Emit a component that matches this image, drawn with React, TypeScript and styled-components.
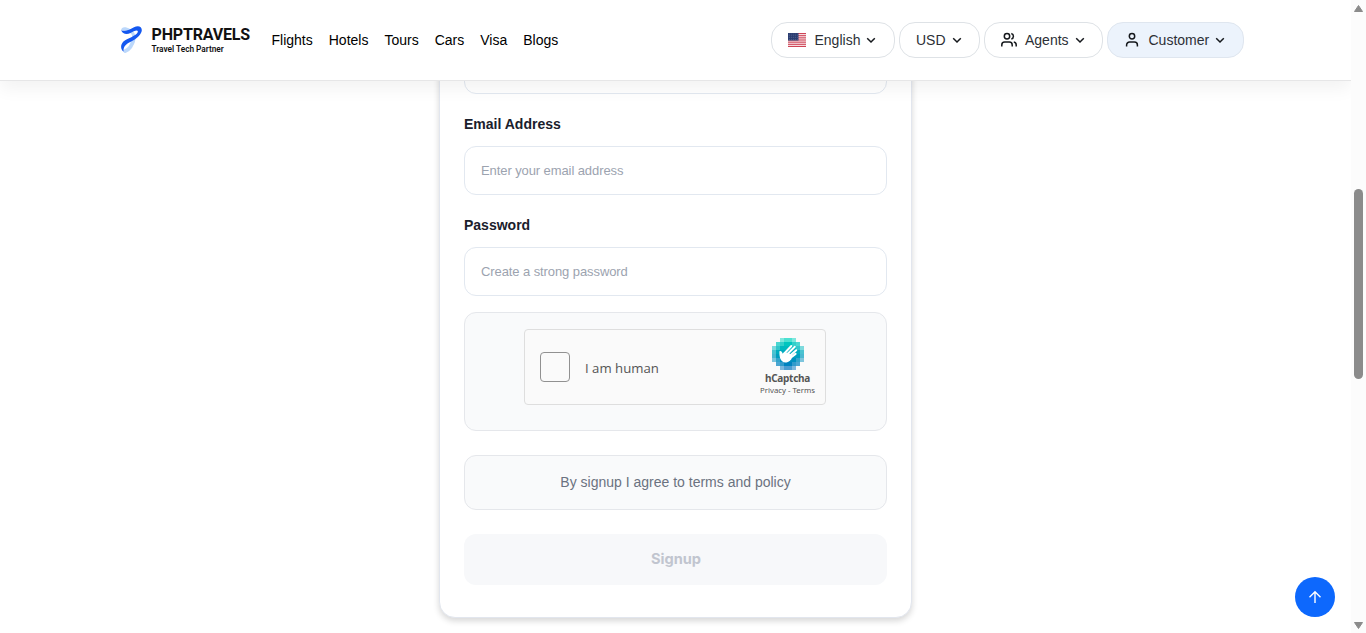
import React from "react";
import styled, { createGlobalStyle } from "styled-components";

const GlobalStyle = createGlobalStyle`
  *, *::before, *::after { box-sizing: border-box; }
  html, body { margin: 0; height: 100%; overflow: hidden; background: #fff; }
  body { font-family: "Liberation Sans", Arial, sans-serif; font-size: 14px; color: #000; }
  button, input { font-family: inherit; margin: 0; }
`;

const Window = styled.div`
  display: grid;
  grid-template-columns: 1fr 15px;
  height: 633px;
  overflow: hidden;
`;

const Page = styled.div`
  position: relative;
  display: flex;
  flex-direction: column;
  min-width: 0;
  height: 633px;
  overflow: hidden;
`;

const Header = styled.header`
  position: relative;
  z-index: 2;
  flex: none;
  display: flex;
  align-items: center;
  justify-content: space-between;
  height: 81px;
  padding: 0 107px 0 120px;
  background: #fff;
  border-bottom: 1px solid #e6e6e7;
  box-shadow: 0 8px 16px rgba(0, 0, 0, 0.05);
`;

const HeaderSide = styled.div<{ $gap: number }>`
  display: flex;
  align-items: center;
  gap: ${(p) => p.$gap}px;
`;

const Brand = styled.a`
  display: flex;
  align-items: flex-start;
  width: 135.5px;
  height: 30px;
  gap: 7.5px;
  color: #111;
`;

const BrandText = styled.div`
  font-family: Roboto, sans-serif;
  white-space: nowrap;
`;

const BrandName = styled.div`
  font-size: 16px;
  line-height: 19px;
  font-weight: 700;
  letter-spacing: -0.17px;
`;

const BrandTag = styled.div`
  margin-top: 1px;
  font-size: 8.3px;
  line-height: 9px;
  font-weight: 600;
  letter-spacing: -0.02px;
`;

const NavLink = styled.a`
  line-height: 20px;
`;

const PillButton = styled.button<{ $width: number; $tinted?: boolean; $gap?: number }>`
  display: flex;
  align-items: center;
  width: ${(p) => p.$width}px;
  height: 36px;
  padding: 0 0 0 16px;
  border: 1px solid ${(p) => (p.$tinted ? "#dfe6ef" : "#dee2e6")};
  border-radius: 16px;
  background: ${(p) => (p.$tinted ? "#ecf3fc" : "#fff")};
  color: #2c3036;
  font-size: 14px;
  gap: ${(p) => p.$gap ?? 8}px;
`;

const PillLabel = styled.span`
  display: flex;
  align-items: center;
  gap: 5px;
  line-height: 20px;
`;

const Main = styled.main`
  flex: 1;
  min-height: 0;
  display: flex;
  justify-content: center;
  align-items: flex-start;
`;

const Card = styled.form`
  width: 473px;
  height: 574px;
  margin-top: -37px;
  padding: 0 24px;
  background: #fff;
  border: 1px solid #e2e6ee;
  border-radius: 16px;
  box-shadow: 0 3px 6px rgba(0, 0, 0, 0.16);
`;

const Field = styled.label`
  display: flex;
  flex-direction: column;
  margin-bottom: 16px;
`;

const FieldLabel = styled.span`
  height: 36px;
  padding-top: 4px;
  line-height: 20px;
  font-weight: 700;
  color: #1a202c;
`;

const Input = styled.input`
  width: 100%;
  height: 49px;
  padding: 0 16px;
  border: 1px solid #e2e8f0;
  border-radius: 12px;
  background: #fff;
  font-size: 13px;
  letter-spacing: -0.09px;
  outline: none;
  &::placeholder { color: #9ca3af; opacity: 1; }
`;

const Panel = styled.div<{ $height: number }>`
  display: flex;
  justify-content: center;
  align-items: flex-start;
  height: ${(p) => p.$height}px;
  padding-top: 16px;
  margin-bottom: 24px;
  border: 1px solid #e5e7eb;
  border-radius: 12px;
  background: #f9fafb;
  color: #6b7280;
  line-height: 20px;
`;

const Captcha = styled.div`
  display: flex;
  align-items: center;
  width: 302px;
  height: 76px;
  padding-left: 15px;
  margin-right: 1px;
  border: 1px solid #dedede;
  border-radius: 4px;
  background: #fafafa;
  color: #555;
  font-family: "Noto Sans", "Open Sans", sans-serif;
`;

const CheckBox = styled.div`
  width: 30px;
  height: 30px;
  border: 1px solid #919191;
  border-radius: 4px;
  background: #fafafa;
`;

const CaptchaText = styled.span`
  flex: 1;
  margin: 2px 0 0 15px;
  font-family: "Open Sans", "Noto Sans", sans-serif;
  font-size: 13.2px;
`;

const CaptchaBrand = styled.div`
  display: flex;
  flex-direction: column;
  align-items: center;
  width: 75px;
  height: 59px;
`;

const CaptchaName = styled.span`
  margin-top: 2px;
  font-size: 10px;
  line-height: 13px;
  font-weight: 700;
  letter-spacing: -0.25px;
`;

const CaptchaLinks = styled.span`
  margin-top: -1px;
  font-size: 7.8px;
  line-height: 12px;
  white-space: nowrap;
`;

const Submit = styled.button`
  width: 100%;
  height: 51px;
  padding: 0 0 2px 1px;
  border: 0;
  border-radius: 12px;
  background: #f7f8fa;
  color: #c1c5cf;
  font-family: Inter, sans-serif;
  font-size: 14.6px;
  font-weight: 700;
`;

const ScrollTop = styled.button`
  position: absolute;
  right: 16px;
  bottom: 16px;
  display: flex;
  align-items: center;
  justify-content: center;
  width: 40px;
  height: 40px;
  padding: 0;
  border: 0;
  border-radius: 50%;
  background: #0d68fd;
`;

const Scrollbar = styled.div`
  display: flex;
  flex-direction: column;
  align-items: center;
  background: #fcfcfc;
  height: 633px;
`;

const ScrollTrack = styled.div`
  flex: 1;
  padding-top: 173px;
`;

const ScrollThumb = styled.div`
  width: 9px;
  height: 190px;
  border-radius: 5px;
  background: #8b8b8b;
`;

const Chevron = () => (
  <svg width="12" height="12" viewBox="0 0 12 12" fill="none">
    <path d="M2.200 4.200 6 8l3.800-3.800" stroke="#15181c" strokeWidth="1.500" />
  </svg>
);

const Logo = () => (
  <svg width="24" height="30" viewBox="0 0 24 30" fill="none">
    <path d="M2.500 5.500C3 2.500 7 3.500 11 6.500C15.500 10 14.500 14.500 12.500 19" stroke="#bcd8fb" strokeWidth="3" />
    <path d="M13.300 14C12.500 19 10.500 24 5.300 26" stroke="#bcd8fb" strokeWidth="3.800" strokeLinecap="round" />
    <path
      d="M1.200 5.200C5 7 10 4.500 14 2.200C19 -.1 22.700 2 21.600 6.500C20.300 11 15.800 14 10.700 16.800C6.300 19 3 21.500 3.600 26.800C0 24 .2 18.500 4.800 15.500C10.500 12.300 17.500 10 17.900 6.500C17.600 4.600 14 6 10.500 8C6.500 10 2.600 9 1.200 5.200Z"
      fill="#1458f0"
    />
  </svg>
);

const Flag = () => (
  <svg width="18" height="14" viewBox="0 0 18 14">
    <rect width="18" height="14" fill="#f8e8ea" />
    {[0, 2, 4, 6, 8, 10, 12].map((n) => (
      <rect key={n} y={n * 1.077} width="18" height="1.077" fill="#cf4456" />
    ))}
    <rect width="10.500" height="7.540" fill="#2b3d70" />
    {[1, 2.8, 4.6, 6.4].map((y) =>
      [1, 3, 5, 7, 9].map((x) => <circle key={`${x}-${y}`} cx={x + 0.2} cy={y} r=".35" fill="#93a1c6" />)
    )}
  </svg>
);

const UserIcon = () => (
  <svg width="16" height="16" viewBox="0 0 16 16" fill="none" stroke="#15181c" strokeWidth="1.500">
    <circle cx="8" cy="4.300" r="2.700" />
    <path d="M2.600 14.600V13a3 3 0 0 1 3-3h4.800a3 3 0 0 1 3 3v1.600" />
  </svg>
);

const AgentsIcon = () => (
  <svg width="16" height="16" viewBox="0 0 16 16" fill="none" stroke="#15181c" strokeWidth="1.500">
    <circle cx="6" cy="4.300" r="2.700" />
    <path d="M.8 14.500v-1.600A2.900 2.900 0 0 1 3.600 10h4.800a2.900 2.900 0 0 1 2.800 2.900v1.600" />
    <path d="M10.300 1.500a2.900 2.900 0 0 1 0 5.600M12.800 10a2.900 2.900 0 0 1 2.400 2.900v1.600" />
  </svg>
);

const rowColors = ["#00D4BF", "#00C6BF", "#00B9BF", "#00ABBF", "#009DBF", "#008FBF", "#0082BF", "#0074BF"];
const cellOpacity = [
  [0, 0, 0.5, 0.7, 0.7, 0.5, 0, 0],
  [0, 0.7, 0.8, 1, 1, 0.8, 0.7, 0],
  [0.5, 0.8, 1, 1, 1, 1, 0.8, 0.5],
  [0.7, 1, 1, 1, 1, 1, 1, 0.7],
  [0.7, 1, 1, 1, 1, 1, 1, 0.7],
  [0.5, 0.8, 1, 1, 1, 1, 0.8, 0.5],
  [0, 0.7, 0.8, 1, 1, 0.8, 0.7, 0],
  [0, 0, 0.5, 0.7, 0.7, 0.5, 0, 0],
];

const CaptchaLogo = () => (
  <svg width="32" height="32" viewBox="0 0 32 32" shapeRendering="crispEdges">
    {cellOpacity.map((row, y) =>
      row.map((o, x) =>
        o ? <rect key={`${x}-${y}`} x={x * 4} y={y * 4} width="4" height="4" fill={rowColors[y]} opacity={o} /> : null
      )
    )}
    <g stroke="#fff" strokeWidth="2" strokeLinecap="round" strokeLinejoin="round" shapeRendering="geometricPrecision">
      <path d="M12.500 15.200 19.300 8M14.500 17l8.300-8.200M17 18.500l7.200-6.300M18 20.300l5.600-4.400" />
      <path
        d="M8 13.500c1.500.2 2.100 1.800 2.400 3.300L12.300 14.800l4 .8L19.500 17.500l-.7 3.500c-1.700 2.600-5.500 3.900-8 2.100-2.600-1.900-2.900-6.200-2.800-9.600Z"
        fill="#fff"
        strokeWidth="1.200"
      />
    </g>
  </svg>
);

const links = ["Flights", "Hotels", "Tours", "Cars", "Visa", "Blogs"];

export default function App() {
  return (
    <>
      <GlobalStyle />
      <Window>
        <Page>
          <Header>
            <HeaderSide $gap={16}>
              <Brand>
                <Logo />
                <BrandText>
                  <BrandName>PHPTRAVELS</BrandName>
                  <BrandTag>Travel Tech Partner</BrandTag>
                </BrandText>
              </Brand>
              {links.map((l) => (
                <NavLink key={l}>{l}</NavLink>
              ))}
            </HeaderSide>
            <HeaderSide $gap={4}>
              <PillButton $width={124} $gap={8.5}>
                <Flag />
                <PillLabel>English <Chevron /></PillLabel>
              </PillButton>
              <PillButton $width={81}>
                <PillLabel>USD <Chevron /></PillLabel>
              </PillButton>
              <PillButton $width={119}>
                <AgentsIcon />
                <PillLabel>Agents <Chevron /></PillLabel>
              </PillButton>
              <PillButton $width={137} $tinted $gap={8.5}>
                <UserIcon />
                <PillLabel>Customer <Chevron /></PillLabel>
              </PillButton>
            </HeaderSide>
          </Header>
          <Main>
            <Card>
              <Field>
                <Input type="text" />
              </Field>
              <Field>
                <FieldLabel>Email Address</FieldLabel>
                <Input type="email" placeholder="Enter your email address" />
              </Field>
              <Field>
                <FieldLabel>Password</FieldLabel>
                <Input type="password" placeholder="Create a strong password" />
              </Field>
              <Panel $height={119}>
                <Captcha>
                  <CheckBox />
                  <CaptchaText>I am human</CaptchaText>
                  <CaptchaBrand>
                    <CaptchaLogo />
                    <CaptchaName>hCaptcha</CaptchaName>
                    <CaptchaLinks>Privacy - Terms</CaptchaLinks>
                  </CaptchaBrand>
                </Captcha>
              </Panel>
              <Panel $height={55}>By signup I agree to terms and policy</Panel>
              <Submit type="button">Signup</Submit>
            </Card>
          </Main>
          <ScrollTop aria-label="Back to top">
            <svg width="14" height="14" viewBox="0 0 14 14" fill="none" stroke="#fff" strokeWidth="1.400">
              <path d="M7 13V2M1.500 7.300 7 1.800l5.500 5.500" />
            </svg>
          </ScrollTop>
        </Page>
        <Scrollbar>
          <svg width="15" height="16" viewBox="0 0 15 16">
            <path d="M7.500 5.500 11.500 11.500h-8Z" fill="#8b8b8b" stroke="#8b8b8b" strokeLinejoin="round" />
          </svg>
          <ScrollTrack>
            <ScrollThumb />
          </ScrollTrack>
          <svg width="15" height="16" viewBox="0 0 15 16">
            <path d="M7.500 11.500 11.500 5.500h-8Z" fill="#8b8b8b" stroke="#8b8b8b" strokeLinejoin="round" />
          </svg>
        </Scrollbar>
      </Window>
    </>
  );
}
